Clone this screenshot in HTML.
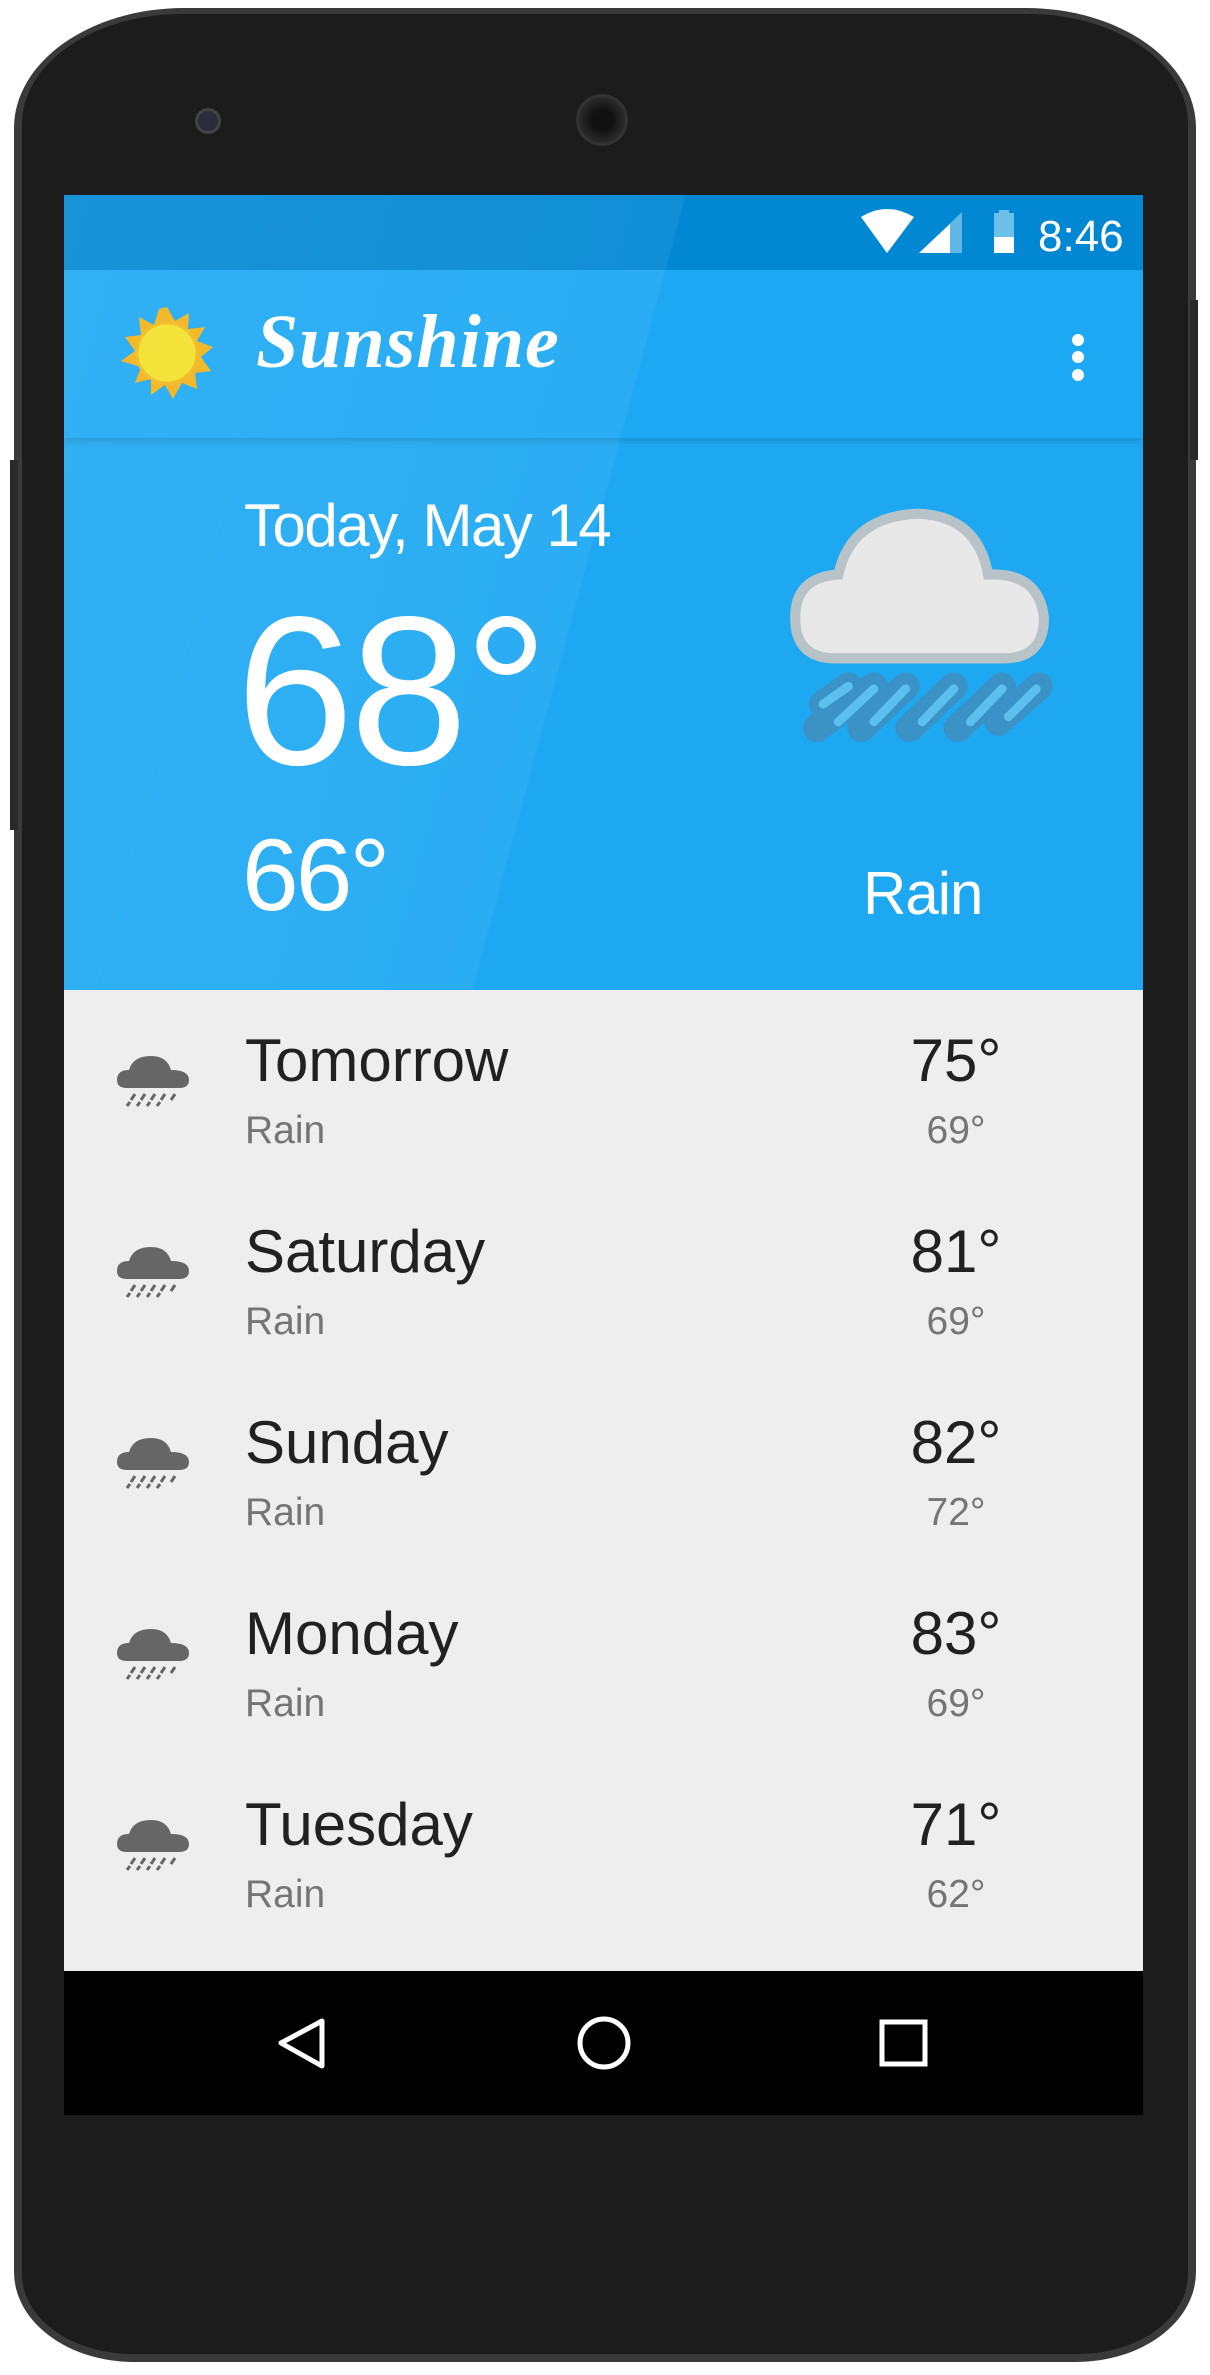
<!DOCTYPE html>
<html><head><meta charset="utf-8"><style>
*{margin:0;padding:0;box-sizing:border-box}
body{width:1210px;height:2375px;background:#fff;position:relative;overflow:hidden;font-family:"Liberation Sans",sans-serif}
.phone{position:absolute;left:14px;top:8px;width:1182px;height:2354px;border-radius:170px 170px 120px 120px/120px 120px 90px 90px;background:#3a3a3a}
.phone2{position:absolute;left:22px;top:14px;width:1166px;height:2340px;border-radius:160px 160px 110px 110px/110px 110px 80px 80px;background:#1c1c1c}
.a{position:absolute}
.screen{position:absolute;left:64px;top:195px;width:1079px;height:1920px;overflow:hidden}
.w{color:#fff}
.row{position:absolute;left:0;width:1079px;height:190px}
.day{position:absolute;left:181px;top:36px;font-size:60px;color:#212121}
.desc{position:absolute;left:181px;top:119px;font-size:39px;color:#757575}
.hi{position:absolute;left:820px;width:144px;text-align:center;top:36px;font-size:60px;color:#212121}
.lo{position:absolute;left:820px;width:144px;text-align:center;top:119px;font-size:39px;color:#757575}
.ic{position:absolute;left:53px;top:62px}
</style></head><body>
<div class="phone"></div><div class="phone2"></div>
<div class="a" style="left:195px;top:108px;width:26px;height:26px;border-radius:50%;background:#2b2b3a;border:3px solid #444"></div>
<div class="a" style="left:576px;top:94px;width:52px;height:52px;border-radius:50%;background:radial-gradient(#111 30%,#2a2a2a 70%);border:3px solid #333"></div>
<div class="a" style="left:1190px;top:300px;width:8px;height:160px;background:#2a2a2a"></div>
<div class="a" style="left:10px;top:460px;width:8px;height:370px;background:#2a2a2a"></div>
<div class="screen">
 <div class="a" style="left:0;top:0;width:1079px;height:75px;background:#0288d3"></div>
 <div class="a" style="left:0;top:75px;width:1079px;height:800px;background:#1ea8f2"></div>
 <div class="a" style="left:0;top:75px;width:1079px;height:168px;background:#1da8f3;box-shadow:0 4px 6px rgba(0,0,0,.12)"></div>
 <div class="a" style="left:0;top:0;width:1079px;height:795px;background:linear-gradient(105deg,rgba(255,255,255,.09) 0,rgba(255,255,255,.06) 48%,rgba(255,255,255,0) 48.2%)"></div>
 <svg class="a" style="left:0;top:0" width="1079" height="75">
  <path d="M797 22 Q823 6 850 22 L823 58 Z" fill="#fff"/>
  <path d="M855 58 L898 17 L898 58 Z" fill="#5fb7e8"/><path d="M855 58 L886 29 L886 58 Z" fill="#fff"/>
  <rect x="930" y="18" width="20" height="40" fill="#6cc0ea"/><rect x="935" y="15" width="10" height="4" fill="#6cc0ea"/><rect x="930" y="42" width="20" height="16" fill="#fff"/>
  <text x="974" y="56" font-size="44" fill="#fff" font-family="Liberation Sans">8:46</text>
 </svg>
 <svg class="a" style="left:50px;top:110px" width="110" height="110">
  <g transform="translate(53,48)">
   <polygon fill="#f3b92a" points="0,-46 8,-32 22,-40 21,-24 38,-26 30,-12 46,-6 34,4 44,18 28,20 30,36 15,30 6,46 -2,32 -16,42 -16,26 -32,30 -26,14 -46,8 -32,-2 -42,-16 -26,-18 -28,-36 -13,-28 -8,-44"/>
   <circle r="30" fill="#f3e33a" stroke="#f0c030" stroke-width="3"/>
  </g>
 </svg>
 <div class="a w" style="left:192px;top:104px;font-family:'Liberation Serif',serif;font-style:italic;font-weight:bold;font-size:76px;letter-spacing:1px">Sunshine</div>
 <div class="a" style="left:1008px;top:139px;width:12px;height:12px;border-radius:50%;background:#fff;box-shadow:0 17px 0 #fff,0 35px 0 #fff"></div>
 <div class="a w" style="left:180px;top:296px;font-size:60px;letter-spacing:-1.5px">Today, May 14</div>
 <div class="a w" style="left:172px;top:374px;font-size:212px;font-weight:300;letter-spacing:-4px">68°</div>
 <div class="a w" style="left:178px;top:622px;font-size:102px;letter-spacing:-3px">66°</div>
 <div class="a w" style="left:799px;top:664px;font-size:60px;letter-spacing:-1px">Rain</div>
 <svg class="a" style="left:721px;top:273px" width="330" height="330" viewBox="0 0 260 260">
  <path d="M40 150 Q8 150 8 118 Q8 86 42 84 Q52 38 105 36 Q152 38 160 84 Q200 82 204 118 Q204 150 172 150 Z" fill="#e8e8e8" stroke="#b8c3c8" stroke-width="8"/>
  <g stroke="#3f8fc0" stroke-width="22" stroke-linecap="round" opacity=".85">
   <path d="M30 186 L50 172 M25 205 L70 172 M60 205 L95 172 M98 205 L133 172 M136 205 L171 172 M168 200 L200 172"/>
  </g>
  <g stroke="#5bc0ee" stroke-width="7" stroke-linecap="round">
   <path d="M30 186 L50 172 M42 200 L70 174 M70 200 L95 174 M108 200 L133 174 M146 200 L171 174 M176 196 L198 174"/>
  </g>
 </svg>
 <div class="a" style="left:0;top:795px;width:1079px;height:981px;background:#eeeeee">
  <div class="row" style="top:0"><svg class="ic" width="74" height="66"><path d="M10 36 Q0 36 0 28 Q0 18 12 18 Q16 4 34 4 Q50 4 54 18 Q72 18 72 28 Q72 36 62 36Z" fill="#666"/><path d="M14 48 l4 -6 M24 48 l4 -6 M34 48 l4 -6 M44 48 l4 -6 M54 48 l4 -6 M10 54 l3 -4 M20 54 l3 -4 M30 54 l3 -4 M40 54 l3 -4" stroke="#666" stroke-width="3"/></svg><div class="day">Tomorrow</div><div class="desc">Rain</div><div class="hi">75°</div><div class="lo">69°</div></div>
  <div class="row" style="top:191px"><svg class="ic" width="74" height="66"><path d="M10 36 Q0 36 0 28 Q0 18 12 18 Q16 4 34 4 Q50 4 54 18 Q72 18 72 28 Q72 36 62 36Z" fill="#666"/><path d="M14 48 l4 -6 M24 48 l4 -6 M34 48 l4 -6 M44 48 l4 -6 M54 48 l4 -6 M10 54 l3 -4 M20 54 l3 -4 M30 54 l3 -4 M40 54 l3 -4" stroke="#666" stroke-width="3"/></svg><div class="day">Saturday</div><div class="desc">Rain</div><div class="hi">81°</div><div class="lo">69°</div></div>
  <div class="row" style="top:382px"><svg class="ic" width="74" height="66"><path d="M10 36 Q0 36 0 28 Q0 18 12 18 Q16 4 34 4 Q50 4 54 18 Q72 18 72 28 Q72 36 62 36Z" fill="#666"/><path d="M14 48 l4 -6 M24 48 l4 -6 M34 48 l4 -6 M44 48 l4 -6 M54 48 l4 -6 M10 54 l3 -4 M20 54 l3 -4 M30 54 l3 -4 M40 54 l3 -4" stroke="#666" stroke-width="3"/></svg><div class="day">Sunday</div><div class="desc">Rain</div><div class="hi">82°</div><div class="lo">72°</div></div>
  <div class="row" style="top:573px"><svg class="ic" width="74" height="66"><path d="M10 36 Q0 36 0 28 Q0 18 12 18 Q16 4 34 4 Q50 4 54 18 Q72 18 72 28 Q72 36 62 36Z" fill="#666"/><path d="M14 48 l4 -6 M24 48 l4 -6 M34 48 l4 -6 M44 48 l4 -6 M54 48 l4 -6 M10 54 l3 -4 M20 54 l3 -4 M30 54 l3 -4 M40 54 l3 -4" stroke="#666" stroke-width="3"/></svg><div class="day">Monday</div><div class="desc">Rain</div><div class="hi">83°</div><div class="lo">69°</div></div>
  <div class="row" style="top:764px"><svg class="ic" width="74" height="66"><path d="M10 36 Q0 36 0 28 Q0 18 12 18 Q16 4 34 4 Q50 4 54 18 Q72 18 72 28 Q72 36 62 36Z" fill="#666"/><path d="M14 48 l4 -6 M24 48 l4 -6 M34 48 l4 -6 M44 48 l4 -6 M54 48 l4 -6 M10 54 l3 -4 M20 54 l3 -4 M30 54 l3 -4 M40 54 l3 -4" stroke="#666" stroke-width="3"/></svg><div class="day">Tuesday</div><div class="desc">Rain</div><div class="hi">71°</div><div class="lo">62°</div></div>
 </div>
 <div class="a" style="left:0;top:1776px;width:1079px;height:144px;background:#000">
  <svg width="1079" height="144">
   <path d="M217 72 L258 50 L258 95 Z" fill="none" stroke="#fff" stroke-width="5" stroke-linejoin="round"/>
   <circle cx="540" cy="72" r="24" fill="none" stroke="#fff" stroke-width="5"/>
   <rect x="818" y="51" width="43" height="42" fill="none" stroke="#fff" stroke-width="5"/>
  </svg>
 </div>
</div>
</body></html>
